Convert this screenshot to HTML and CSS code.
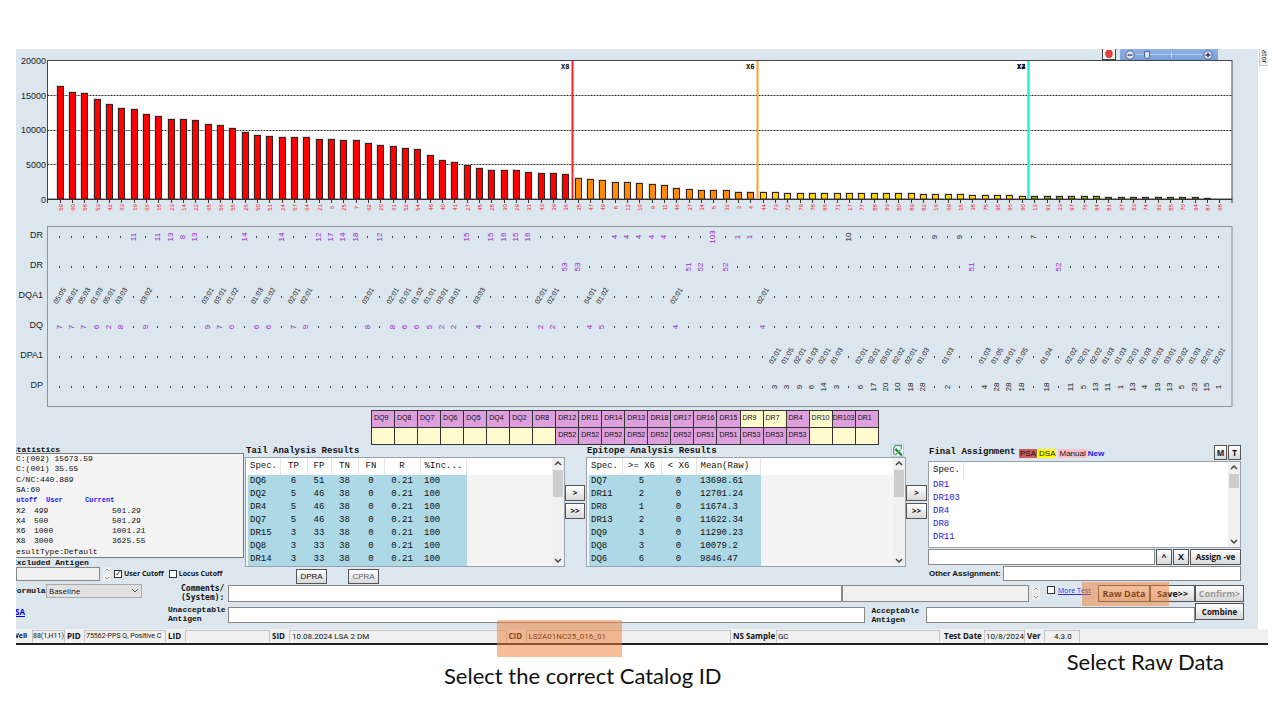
FILE: index.html
```html
<!DOCTYPE html>
<html lang="en">
<head>
<meta charset="utf-8">
<title>Antibody Analysis</title>
<link rel="stylesheet" href="styles.css">
</head>
<body>
<div class="window">
  <main class="panel">
    <div class="toolbar">
      <button class="record" type="button" aria-label="Record"><svg viewBox="0 0 12 10"><ellipse cx="6" cy="4.500" rx="4.500" ry="5.500" fill="#e0403a"/></svg></button>
      <div class="zoom">
        <button class="zoom-btn" type="button" aria-label="Zoom out"><svg viewBox="0 0 10 10"><circle cx="5" cy="5" r="4.200" fill="#dfe8f6" stroke="#4a6597"/><path d="M2.500 5h5" stroke="#333c50" stroke-width="1.300"/></svg></button>
        <input class="zoom-range" type="range" min="0" max="100" value="14" aria-label="Zoom">
        <button class="zoom-btn" type="button" aria-label="Zoom in"><svg viewBox="0 0 10 10"><circle cx="5" cy="5" r="4.200" fill="#dfe8f6" stroke="#4a6597"/><path d="M2.500 5h5M5 2.500v5" stroke="#333c50" stroke-width="1.300"/></svg></button>
      </div>
    </div>
    <svg class="chart" id="chart" viewBox="0 0 1242 350" role="img" aria-label="Bead reactivity"></svg>

    <table class="antigens">
      <tbody>
        <tr><td>DQ9</td><td>DQ8</td><td>DQ7</td><td>DQ6</td><td>DQ5</td><td>DQ4</td><td>DQ2</td><td>DR8</td><td>DR12</td><td>DR11</td><td>DR14</td><td>DR13</td><td>DR18</td><td>DR17</td><td>DR16</td><td>DR15</td><td class="neg">DR9</td><td class="neg">DR7</td><td>DR4</td><td class="neg">DR10</td><td class="long">DR103</td><td>DR1</td></tr>
        <tr><td class="neg"></td><td class="neg"></td><td class="neg"></td><td class="neg"></td><td class="neg"></td><td class="neg"></td><td class="neg"></td><td class="neg"></td><td>DR52</td><td>DR52</td><td>DR52</td><td>DR52</td><td>DR52</td><td>DR52</td><td>DR51</td><td>DR51</td><td>DR53</td><td>DR53</td><td>DR53</td><td class="neg"></td><td class="neg"></td><td class="neg"></td></tr>
      </tbody>
    </table>

    <div class="results">
      <section class="stats">
        <h2 class="stats-title cut">Statistics</h2>
        <div class="stats-box">
          <p>C:(002) 15673.59</p>
          <p>C:(001) 35.55</p>
          <p>C/NC:440.889</p>
          <p>SA:60</p>
          <p class="stats-head"><span class="cut">Cutoff</span><span>User</span><span>Current</span></p>
          <p class="stats-row"><span>X2</span><span>499</span><span>501.29</span></p>
          <p class="stats-row"><span>X4</span><span>500</span><span>501.29</span></p>
          <p class="stats-row"><span>X6</span><span>1000</span><span>1001.21</span></p>
          <p class="stats-row"><span>X8</span><span>3000</span><span>3625.55</span></p>
          <p>esultType:Default</p>
        </div>
        <label class="stats-title cut" for="excluded">Excluded Antigen</label>
        <div class="options">
          <input class="field excluded" id="excluded" type="text">
          <span class="spin"><svg viewBox="0 0 8 14"><path d="M2 4l2-2 2 2M2 10l2 2 2-2" fill="none" stroke="#999"/></svg></span>
          <label class="check"><input type="checkbox" checked>User Cutoff</label>
          <label class="check"><input type="checkbox">Locus Cutoff</label>
        </div>
      </section>

      <section class="analysis">
        <h2 class="title">Tail Analysis Results</h2>
        <div class="list">
          <div class="list-body">
            <table class="grid tail">
              <thead><tr><th>Spec.</th><th>TP</th><th>FP</th><th>TN</th><th>FN</th><th>R</th><th>%Inc...</th></tr></thead>
              <tbody>
                <tr><td>DQ6</td><td>6</td><td>51</td><td>38</td><td>0</td><td>0.21</td><td>100</td></tr>
                <tr><td>DQ2</td><td>5</td><td>46</td><td>38</td><td>0</td><td>0.21</td><td>100</td></tr>
                <tr><td>DR4</td><td>5</td><td>46</td><td>38</td><td>0</td><td>0.21</td><td>100</td></tr>
                <tr><td>DQ7</td><td>5</td><td>46</td><td>38</td><td>0</td><td>0.21</td><td>100</td></tr>
                <tr><td>DR15</td><td>3</td><td>33</td><td>38</td><td>0</td><td>0.21</td><td>100</td></tr>
                <tr><td>DQ8</td><td>3</td><td>33</td><td>38</td><td>0</td><td>0.21</td><td>100</td></tr>
                <tr><td>DR14</td><td>3</td><td>33</td><td>38</td><td>0</td><td>0.21</td><td>100</td></tr>
              </tbody>
            </table>
          </div>
          <div class="scroll"><svg viewBox="0 0 10 12"><path d="M2 7l3-3 3 3" fill="none" stroke="#444" stroke-width="1.500"/></svg><i class="thumb"></i><svg viewBox="0 0 10 12"><path d="M2 5l3 3 3-3" fill="none" stroke="#444" stroke-width="1.500"/></svg></div>
        </div>
        <div class="pra">
          <button class="btn plain" type="button">DPRA</button>
          <button class="btn plain dim" type="button">CPRA</button>
        </div>
      </section>

      <div class="movers">
        <button class="btn" type="button">&gt;</button>
        <button class="btn" type="button">&gt;&gt;</button>
      </div>

      <section class="analysis">
        <h2 class="title">Epitope Analysis Results
          <button class="excel" type="button" aria-label="Export to Excel"><svg viewBox="0 0 12 12"><rect x="0.500" y="0.500" width="11" height="11" fill="#f4f4ff" stroke="#c9c8f4"/><path d="M2.500 10V3.500l1.500-2h5.500v3" fill="#fff" stroke="#4ba35a" stroke-width="1.200"/><path d="M2.500 10h3" stroke="#8cc795"/><path d="M4 4.500l6 6" stroke="#1f8436" stroke-width="2"/><path d="M9 5l-5 5" stroke="#55b067" stroke-width="1.200"/></svg></button>
        </h2>
        <div class="list">
          <div class="list-body">
            <table class="grid epitope">
              <thead><tr><th>Spec.</th><th>&gt;= X6</th><th>&lt; X6</th><th>Mean(Raw)</th></tr></thead>
              <tbody>
                <tr><td>DQ7</td><td>5</td><td>0</td><td>13698.61</td></tr>
                <tr><td>DR11</td><td>2</td><td>0</td><td>12701.24</td></tr>
                <tr><td>DR8</td><td>1</td><td>0</td><td>11674.3</td></tr>
                <tr><td>DR13</td><td>2</td><td>0</td><td>11622.34</td></tr>
                <tr><td>DQ9</td><td>3</td><td>0</td><td>11290.23</td></tr>
                <tr><td>DQ8</td><td>3</td><td>0</td><td>10079.2</td></tr>
                <tr><td>DQ6</td><td>6</td><td>0</td><td>9846.47</td></tr>
              </tbody>
            </table>
          </div>
          <div class="scroll"><svg viewBox="0 0 10 12"><path d="M2 7l3-3 3 3" fill="none" stroke="#444" stroke-width="1.500"/></svg><i class="thumb"></i><svg viewBox="0 0 10 12"><path d="M2 5l3 3 3-3" fill="none" stroke="#444" stroke-width="1.500"/></svg></div>
        </div>
      </section>

      <div class="movers">
        <button class="btn" type="button">&gt;</button>
        <button class="btn" type="button">&gt;&gt;</button>
      </div>

      <section class="final">
        <header class="final-head">
          <h2 class="title">Final Assignment</h2>
          <span class="key psa">PSA</span><span class="key dsa">DSA</span><span class="key manual">Manual</span><span class="key new">New</span>
          <button class="btn mini" type="button">M</button>
          <button class="btn mini" type="button">T</button>
        </header>
        <div class="list final-list">
          <div class="list-body">
            <table class="grid assigned">
              <thead><tr><th>Spec.</th></tr></thead>
              <tbody>
                <tr><td>DR1</td></tr><tr><td>DR103</td></tr><tr><td>DR4</td></tr><tr><td>DR8</td></tr><tr><td>DR11</td></tr>
              </tbody>
            </table>
          </div>
          <div class="scroll"><svg viewBox="0 0 10 12"><path d="M2 7l3-3 3 3" fill="none" stroke="#444" stroke-width="1.500"/></svg><i class="thumb short"></i><svg viewBox="0 0 10 12"><path d="M2 5l3 3 3-3" fill="none" stroke="#444" stroke-width="1.500"/></svg></div>
        </div>
        <div class="assign">
          <input class="field grow" type="text" aria-label="Assignment">
          <button class="btn square" type="button">^</button>
          <button class="btn square" type="button">X</button>
          <button class="btn assign-btn" type="button">Assign -ve</button>
        </div>
        <div class="other">
          <label for="other">Other Assignment:</label>
          <input class="field grow" id="other" type="text">
        </div>
      </section>
    </div>

    <div class="entry">
      <div class="entry-left">
        <div class="formula">
          <label class="cut" for="formula">Formula</label>
          <span class="select-wrap"><select id="formula"><option>Baseline</option></select><svg viewBox="0 0 10 8"><path d="M2 2l3 3 3-3" fill="none" stroke="#555"/></svg></span>
        </div>
        <a class="msa" href="#">SA</a>
      </div>
      <div class="entry-main">
        <div class="row">
          <label class="row-label comments" for="comments">Comments/<br>(System):</label>
          <input class="field comment-field" id="comments" type="text">
          <input class="field system" type="text" aria-label="System comments" readonly>
          <span class="spin"><svg viewBox="0 0 8 14"><path d="M2 4l2-2 2 2M2 10l2 2 2-2" fill="none" stroke="#999"/></svg></span>
          <span class="more"><input type="checkbox" id="more" aria-label="More Test"><a href="#">More Test</a></span>
          <div class="actions">
            <button class="btn raw" type="button">Raw Data</button>
            <button class="btn save" type="button">Save&gt;&gt;</button>
            <button class="btn wide off" type="button" disabled>Confirm&gt;</button>
            <i class="mark mark-raw"></i>
          </div>
        </div>
        <div class="row lower">
          <label class="row-label" for="unacceptable">Unacceptable<br>Antigen</label>
          <input class="field unacceptable" id="unacceptable" type="text">
          <label class="row-label acceptable-label" for="acceptable">Acceptable<br>Antigen</label>
          <input class="field acceptable" id="acceptable" type="text">
          <button class="btn wide combine" type="button">Combine</button>
        </div>
      </div>
    </div>
  </main>
  <aside class="side"><button type="button">ator</button></aside>
</div>

<footer class="status">
  <b class="cut well">Well</b><span class="v-well">88(1,H11)</span>
  <b>PID</b><span class="v-pid">75562-PPS Q, Positive C</span>
  <b>LID</b><span class="v-lid"></span>
  <b>SID</b><span class="v-sid">10.08.2024 LSA 2 DM</span>
  <div class="catalog"><b>CID</b><span class="v-cid">LS2A01NC25_016_01</span><i class="mark mark-cid"></i></div>
  <b class="s-ns">NS Sample</b><span class="v-ns">GC</span>
  <b class="s-date">Test Date</b><span class="v-date">10/8/2024</span>
  <b>Ver</b><span class="v-ver">4.3.0</span>
</footer>

<div class="notes">
  <p class="note-cid">Select the correct Catalog ID</p>
  <p class="note-raw">Select Raw Data</p>
</div>
<script src="chart.js"></script>
</body>
</html>
```
FILE: styles.css
```css
* { box-sizing: border-box; }

body {
  margin: 0;
  padding-top: 49px;
  background: #fff;
  color: #111;
  font: 8px/10px "Open Sans", "Liberation Sans", sans-serif;
  overflow-x: hidden;
}

h2, p { margin: 0; }
button, input, select { font: inherit; color: inherit; margin: 0; border-radius: 0; }
svg { display: block; }

.window { display: flex; margin: 0 12px 0 16px; }
.panel { flex: 1; min-width: 0; background: #dce6ee; overflow: hidden; }

.side { width: 10px; padding-left: 1px; }
.side button {
  writing-mode: vertical-rl;
  width: 9px;
  height: 17px;
  padding: 0;
  border: 1px solid #c4c4c4;
  border-width: 0 0 1px 1px;
  background: #f2f2f2;
  font-size: 7px;
  line-height: 8px;
}

.toolbar { display: flex; justify-content: flex-end; gap: 4px; height: 11px; padding-right: 40px; }
.record { width: 14px; height: 11px; padding: 0 1px; border: 1px solid #444; border-top: 0; background: #f4f4f4; }
.zoom { display: flex; align-items: center; width: 98px; height: 11px; padding: 0 5px; background: linear-gradient(#8fb0e2, #7ba0da); }
.zoom-btn { width: 10px; height: 10px; padding: 0; border: 0; background: none; flex: none; }
.zoom-range { appearance: none; flex: 1; min-width: 0; height: 10px; background: linear-gradient(#b9cdf0, #b9cdf0) center / 100% 1px no-repeat, linear-gradient(#c9d8f3, #c9d8f3) 36px center / 1px 6px no-repeat; }
.zoom-range::-webkit-slider-thumb { appearance: none; width: 6px; height: 8px; border: 1px solid #4a6597; border-radius: 0 0 3px 3px; background: #dfe8f6; }

.chart { width: 100%; height: auto; overflow: visible; font-family: "Liberation Sans", sans-serif; }
.axis { font: 9px "Liberation Sans Narrow", "Liberation Sans", sans-serif; fill: #222; text-anchor: end; }
.bead { font-size: 6px; fill: #f01818; text-anchor: middle; }
.allele { font-size: 8px; text-anchor: middle; fill: #222; }
.allele.slanted { font-size: 7px; }
.allele.hot { fill: #9a1fd0; }
.cutoff { font: bold 7px "DejaVu Sans Mono", monospace; text-anchor: end; }

.antigens { margin-left: 355px; border-collapse: collapse; table-layout: fixed; width: 508px; font: 7px/8px "Liberation Sans", sans-serif; }
.antigens td { height: 17px; padding: 3px 0 0 2px; border: 1px solid #333; background: #dda0dd; vertical-align: top; white-space: nowrap; }
.antigens .long { padding-left: 0; }
.antigens .neg { background: #fffacd; }

.results { display: grid; grid-template-columns: 229px minmax(0, 1fr) 21px minmax(0, 1fr) 22px 313px; padding-right: 17px; }
.title { display: flex; justify-content: space-between; height: 12px; padding-left: 1px; font: bold 9px/12px "Liberation Mono", monospace; white-space: nowrap; }

.stats { font: 8px/10px "Liberation Mono", monospace; padding-right: 1px; }
.stats-title { display: block; font: bold 8px/8px "Liberation Mono", monospace; padding-top: 1px; height: 8px; }
.cut { margin-left: -4px; }
.stats-box { display: grid; grid-template-rows: repeat(10, 1fr); height: 105px; border: 1px solid #777; border-left: 0; background: #f4f4f4; }
.stats-head, .stats-row { display: grid; grid-template-columns: 18px 78px 1fr; white-space: pre; }
.stats-head { grid-template-columns: 30px 39px 1fr; font-size: 7px; font-weight: bold; color: #1a1aff; }
.options { display: flex; align-items: center; gap: 3px; margin-top: 1px; font: bold 7px/10px "Open Sans", sans-serif; }
.excluded { width: 84px; }
.field { height: 16px; padding: 0 3px; border: 1px solid #888; background: #fff; min-width: 0; }
.options .excluded { height: 14px; background: #f0f0f0; }
.grow { flex: 1; }
.spin { flex: none; width: 8px; background: #eee; }
.check { display: flex; align-items: center; gap: 2px; margin-right: 2px; white-space: nowrap; }
input[type="checkbox"] { appearance: none; flex: none; width: 8px; height: 8px; border: 1px solid #333; background: #fff; }
input[type="checkbox"]:checked::after { content: "✓"; display: block; font: bold 8px/6px "DejaVu Sans", sans-serif; }

.list { display: flex; height: 110px; border: 1px solid #9aa3ab; background: #f4f4f4; overflow: hidden; }
.list-body { flex: 1; min-width: 0; background: linear-gradient(#fff 17px, #f4f4f4 17px); padding-left: 2px; }
.grid { border-collapse: collapse; table-layout: fixed; font: 9px/13px "Liberation Mono", monospace; }
.grid th { height: 17px; padding: 0; border-right: 1px solid #e4e4e4; background: #fff; font-weight: normal; white-space: nowrap; }
.grid td { height: 13px; padding: 0; background: #add8e6; text-align: center; }
.grid th:first-child, .grid td:first-child { padding-left: 2px; text-align: left; }
.tail { width: 219px; }
.tail th:nth-child(1) { width: 32px; }
.tail th:nth-child(2) { width: 27px; }
.tail th:nth-child(3) { width: 24px; }
.tail th:nth-child(4) { width: 27px; }
.tail th:nth-child(5) { width: 26px; }
.tail th:nth-child(6) { width: 36px; }
.tail th:last-child, .tail td:last-child, .epitope th:last-child, .epitope td:last-child { padding-left: 4px; text-align: left; }
.epitope { width: 172px; }
.epitope th:nth-child(1) { width: 33px; }
.epitope th:nth-child(2) { width: 39px; }
.epitope th:nth-child(3) { width: 35px; }
.scroll { display: flex; flex-direction: column; justify-content: space-between; width: 12px; padding: 0 1px; background: #f0f0f0; }
.thumb { height: 27px; margin-bottom: auto; background: #cdcdcd; }
.thumb.short { height: 14px; }
.pra { display: flex; gap: 21px; padding: 2px 0 0 51px; }

.btn { height: 16px; padding: 0; border: 1px solid #555; background: linear-gradient(#fff, #d8d8d8); font: bold 9px/12px "Open Sans", sans-serif; white-space: nowrap; }
.btn.plain { width: 31px; height: 15px; font: 8px/12px "Liberation Sans", sans-serif; }
.btn.dim { color: #4f6678; }
.movers { display: flex; flex-direction: column; gap: 2px; padding: 40px 1px 0 0; }
.movers .btn { font-size: 8px; }
.excel { width: 13px; height: 13px; margin: -1px 2px 0 0; padding: 0; border: 0; background: none; }

.final-head { display: flex; height: 16px; align-items: flex-start; font: 8px/10px "Liberation Sans", sans-serif; }
.final-head .title { flex: none; width: 91px; line-height: 14px; }
.key { margin-top: 4px; padding: 0 1px; height: 9px; line-height: 9px; }
.psa { background: #cd5c5c; margin-right: 1px; }
.dsa { background: #ffff00; margin-right: 2px; }
.manual { background: #f9c0cb; }
.new { color: #1414ff; font-weight: bold; margin-right: auto; }
.mini { width: 13px; height: 15px; margin-left: 1px; font-size: 8px; }
.final-list { height: 87px; }
.final-list, .final-list .list-body { background: #fff; }
.assigned { width: 33px; }
.assigned td { background: none; color: #2222e0; white-space: nowrap; }
.assign { display: flex; gap: 1px; margin-top: 1px; }
.square { width: 16px; }
.assign-btn { width: 51px; font-size: 8px; }
.other { display: flex; align-items: center; gap: 2px; margin-top: 1px; padding-left: 1px; font: bold 8px/10px "Liberation Sans", sans-serif; }
.other .field { height: 15px; }
.other label { width: 72px; white-space: nowrap; }

.entry { display: grid; grid-template-columns: 152px minmax(0, 1fr); padding-right: 14px; height: 45px; }
.entry-left { font: bold 8px/10px "Liberation Mono", monospace; }
.formula { display: flex; align-items: center; justify-content: space-between; width: 126px; }
.select-wrap { display: flex; align-items: center; position: relative; }
.select-wrap select { appearance: none; width: 96px; height: 14px; padding: 0 2px; border: 1px solid #aaa; background: #e1e1e1; font: 8px/10px "Open Sans", sans-serif; }
.select-wrap svg { position: absolute; right: 2px; width: 10px; }
.msa { display: block; margin: 9px 0 0 -1px; font: bold 8px/10px "Open Sans", sans-serif; color: #0000ee; }
.row { display: flex; align-items: flex-start; }
.row .field { height: 17px; }
.row-label { flex: none; width: 60px; font: bold 8px/9px "Liberation Mono", monospace; white-space: nowrap; }
.comments { padding-left: 13px; font: bold 8px/9px "DejaVu Sans Mono", monospace; }
.comment-field { flex: 618; margin-top: 1px; }
.row .system { flex: 183; margin-top: 1px; background: #f0f0f0; }
.row > .spin { margin: 2px 7px 0 3px; }
.more { display: flex; gap: 3px; width: 51px; padding-top: 2px; color: #2a2af0; white-space: nowrap; font: 7px/9px "Open Sans", sans-serif; }
.more a { color: inherit; }
.actions { position: relative; display: flex; margin-top: 1px; }
.raw { width: 52px; height: 17px; }
.save { width: 45px; height: 17px; }
.wide { flex: none; width: 49px; height: 17px; }
.off { color: #999; }
.lower { padding-top: 1px; }
.lower .field { margin-top: 4px; height: 16px; }
.lower .row-label { padding-top: 2px; }
.unacceptable { flex: 640; }
.lower .acceptable-label { width: 61px; padding: 3px 0 0 6px; }
.acceptable { flex: 265; }
.combine { font-size: 8px; }

.mark { position: absolute; background: rgba(237, 125, 49, 0.500); pointer-events: none; }
.mark-raw { left: -16px; top: -3px; width: 87px; height: 24px; }
.mark-cid { left: -12px; top: -10px; width: 125px; height: 37px; }

.status { display: flex; align-items: center; gap: 2px; height: 16px; margin: 0 12px 0 16px; padding-right: 188px; border-bottom: 2px solid #222; background: #f0f0f0; font: 8px/11px Roboto, sans-serif; white-space: nowrap; }
.status b { flex: none; width: 15px; height: 12px; font-family: "Open Sans", sans-serif; }
.status .well { width: 18px; clip-path: inset(0 0 0 4px); font-size: 7px; }
.status span { flex: none; height: 12px; border: 1px solid #c4c4c4; border-width: 1px 1px 0 1px; padding-left: 1px; line-height: 11px; }
.status .v-well { width: 33px; padding: 0; font-size: 7px; }
.v-pid { width: 82px; font-size: 7px; }
.v-lid { width: 85px; }
.status .v-sid { flex: 216; padding-left: 2px; }
.catalog { position: relative; flex: 225; display: flex; gap: 2px; }
.status .v-cid { flex: 1; padding-left: 2px; }
.status .s-ns { width: 41px; }
.status .v-ns { flex: 163; }
.status .s-date { width: 40px; padding-left: 2px; }
.v-date { width: 41px; }
.status .v-ver { width: 36px; padding-left: 9px; }

.notes { display: flex; align-items: flex-start; justify-content: space-between; padding: 3px 56px 0 444px; font: 22px/28px Lato, sans-serif; color: #111; white-space: nowrap; }
.note-cid { padding-top: 14px; }
```
FILE: chart.js
```js
const NS = 'http://www.w3.org/2000/svg';
const svg = document.getElementById('chart');

const beads = '59 60 58 53 42 63 19 66 18 23 14 22 65 56 55 26 50 51 24 57 64 21 6 25 7 62 20 61 52 54 48 40 41 27 45 28 30 29 31 43 39 36 35 47 49 8 12 10 9 11 46 37 34 5 32 3 4 44 73 72 79 78 86 71 17 77 88 93 80 89 82 16 69 15 38 75 95 96 90 13 91 33 97 76 84 81 67 83 74 92 85 70 94 87 68'.split(' ');
const values = [16280, 15420, 15330, 14420, 13750, 13080, 12980, 12260, 12020, 11590, 11500, 11350, 10830, 10730, 10250, 9680, 9290, 9100, 9000, 9000, 9000, 8720, 8720, 8530, 8530, 8140, 7760, 7660, 7330, 7230, 6420, 5600, 5410, 4890, 4410, 4120, 4120, 4120, 3930, 3780, 3690, 3590, 2970, 2870, 2780, 2490, 2400, 2300, 2200, 2010, 1530, 1440, 1340, 1250, 1250, 1050, 1050, 960, 960, 860, 860, 860, 860, 860, 860, 810, 810, 810, 810, 810, 670, 670, 670, 670, 570, 570, 570, 570, 480, 480, 480, 480, 380, 380, 380, 340, 340, 340, 340, 240, 240, 240, 240, 100, 0];

const rows = [
  { name: 'DR', y: 176, data: '6=11 8=11 9=13 10=8 11=13 15=14 18=14 21=12 22=17 23=14 24=18 26=12 33=15 35=15 36=16 37=15 38=16 45=4 46=4 47=4 48=4 49=4 53=103 55=1 56=1 64=10 71=9 73=9 79=7' },
  { name: 'DR', y: 206, hot: true, data: '41=53 42=53 51=51 52=52 54=52 74=51 81=52' },
  { name: 'DQA1', y: 236, slanted: true, data: '0=05:05 1=06:01 2=05:03 3=01:03 4=05:01 5=03:03 7=03:02 12=03:01 13=03:01 14=01:02 16=01:03 17=01:02 19=02:01 20=02:01 25=03:01 27=02:01 28=01:01 29=01:02 30=01:01 31=03:01 32=04:01 34=03:03 39=02:01 40=02:01 43=04:01 44=01:02 50=02:01 57=02:01' },
  { name: 'DQ', y: 266, hot: true, data: '0=7 1=7 2=7 3=6 4=2 5=8 7=9 12=9 13=7 14=6 16=6 17=6 19=7 20=9 25=8 27=8 28=6 29=6 30=5 31=2 32=2 34=4 39=2 40=2 43=4 44=5 50=4 57=4' },
  { name: 'DPA1', y: 296, slanted: true, data: '58=02:01 59=01:05 60=02:01 61=01:03 62=02:01 63=01:03 65=02:01 66=02:01 67=03:01 68=02:02 69=02:01 70=01:03 72=01:03 75=01:03 76=01:05 77=04:01 78=01:05 80=01:04 82=02:02 83=02:01 84=02:02 85=01:03 86=01:03 87=02:01 88=01:03 89=01:03 90=03:01 91=02:02 92=01:03 93=02:01 94=02:01' },
  { name: 'DP', y: 326, data: '58=3 59=3 60=9 61=6 62=14 63=3 65=6 66=17 67=20 68=10 69=18 70=28 72=2 75=4 76=28 77=28 78=18 80=18 82=11 83=5 84=13 85=11 86=1 87=13 88=4 89=19 90=13 91=5 92=23 93=15 94=1' }
];

const LEFT = 31.5, RIGHT = 1216, BASE = 139, TOP = 0.5;
const xAt = i => 43.7 + i * 12.335;
const yAt = v => BASE - v / 20000 * (BASE - TOP);

function add(tag, attrs, text) {
  const el = document.createElementNS(NS, tag);
  for (const key in attrs) el.setAttribute(key, attrs[key]);
  if (text !== undefined) el.textContent = text;
  svg.appendChild(el);
}

add('rect', { x: LEFT, y: TOP, width: RIGHT - LEFT, height: BASE - TOP, fill: '#fff', stroke: '#444' });
[0, 5000, 10000, 15000, 20000].forEach(v => {
  const y = yAt(v);
  if (v > 0 && v < 20000) add('path', { d: `M${LEFT} ${Math.round(y) + 0.5}H${RIGHT}`, stroke: '#333', 'stroke-dasharray': '2 1' });
  add('text', { x: 30, y: y + 3.5, class: 'axis' }, v);
});

values.forEach((v, i) => {
  const x = Math.round(xAt(i));
  const fill = i < 42 ? '#f00' : i < 57 ? '#ff8c00' : i < 79 ? '#ffd700' : '#7db810';
  const top = Math.round(yAt(v));
  add('path', { d: `M${x + 0.5} ${BASE}v4`, stroke: '#333' });
  if (v) {
    add('rect', { x: x - 4, y: top - 1, width: 8, height: BASE - top + 1, fill: '#b9cfd2', opacity: 0.6 });
    add('rect', { x: x - 2.5, y: top + 0.5, width: 6, height: Math.max(BASE - top - 0.5, 1), fill, stroke: '#3a2020' });
  }
  add('text', { class: 'bead', transform: `translate(${x + 2.5} 147.5) rotate(-90)` }, beads[i]);
});
add('path', { d: `M${LEFT} ${BASE + 0.5}H${RIGHT}M${LEFT} ${BASE}v4M${RIGHT} ${BASE}v4`, stroke: '#333' });

[[556.5, 'X8', '#ff2020'], [741.5, 'X6', '#ffa030'], [1012.5, 'X2', '#28f0dc'], [1012.5, 'X4', '#28f0dc']].forEach(([x, name, color]) => {
  add('path', { d: `M${x} 1V${BASE}`, stroke: color, 'stroke-width': 2 });
  add('text', { x: x - 3, y: 9, class: 'cutoff' }, name);
});

add('rect', { x: LEFT, y: 166.5, width: RIGHT - LEFT, height: 180, fill: 'none', stroke: '#8a949c' });
rows.forEach(row => {
  add('text', { x: 27, y: row.y + 2, class: 'axis' }, row.name);
  const cells = Object.fromEntries(row.data.split(' ').map(p => p.split('=')));
  beads.forEach((_, i) => {
    const x = xAt(i);
    if (!cells[i]) {
      add('rect', { x: Math.round(x) - 1, y: row.y, width: 1, height: 2, fill: '#444' });
      return;
    }
    const hot = row.hot || (row.name === 'DR' && i < 60);
    const turn = row.slanted ? -60 : -90;
    add('text', { class: 'allele' + (row.slanted ? ' slanted' : '') + (hot ? ' hot' : ''), transform: `translate(${x + 2} ${row.y + 1}) rotate(${turn})` }, cells[i]);
  });
});
```
